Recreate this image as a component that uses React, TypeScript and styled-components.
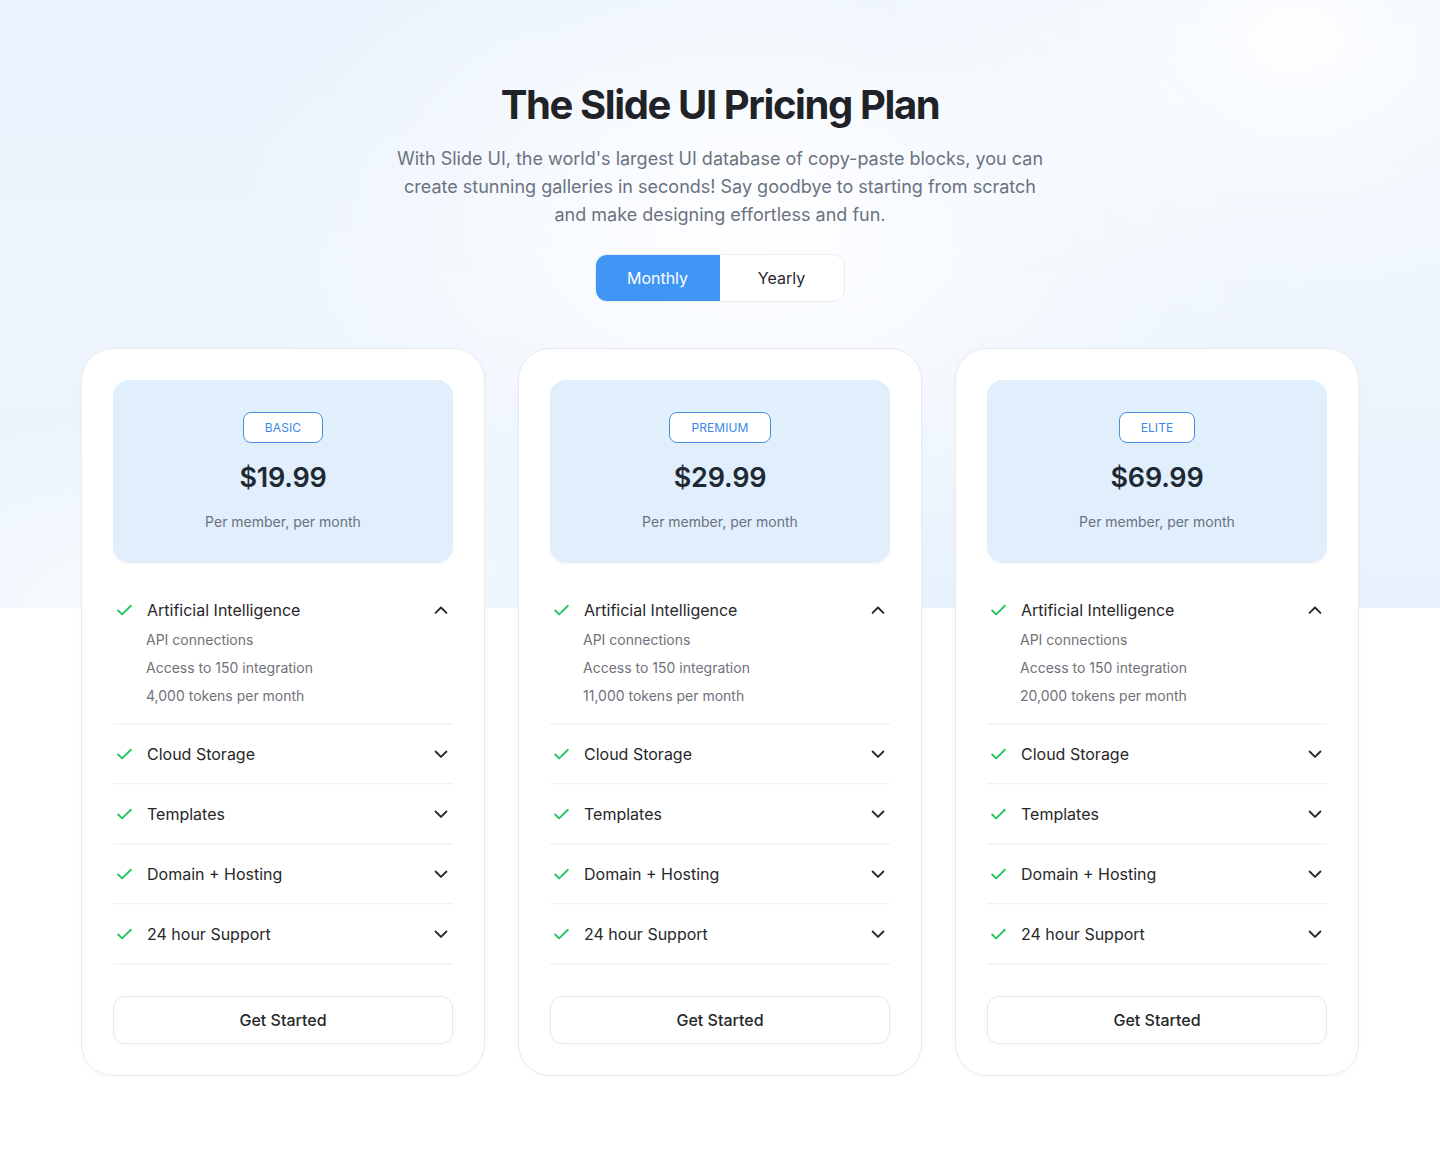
import React, { useState } from 'react';
import styled, { createGlobalStyle } from 'styled-components';

interface Plan {
  tier: string;
  price: string;
  tokens: string;
}

const plans: Plan[] = [
  { tier: 'BASIC', price: '$19.99', tokens: '4,000 tokens per month' },
  { tier: 'PREMIUM', price: '$29.99', tokens: '11,000 tokens per month' },
  { tier: 'ELITE', price: '$69.99', tokens: '20,000 tokens per month' },
];

const otherFeatures = ['Cloud Storage', 'Templates', 'Domain + Hosting', '24 hour Support'];

const GlobalStyle = createGlobalStyle`
  * { box-sizing: border-box; }
  body {
    margin: 0;
    background: #ffffff;
    font-family: Inter, 'Noto Sans', 'Liberation Sans', sans-serif;
    -webkit-font-smoothing: antialiased;
  }
`;

const Page = styled.div`
  position: relative;
  min-height: 1156px;
  background: #ffffff;
`;

const Backdrop = styled.div`
  position: absolute;
  top: 0;
  left: 0;
  right: 0;
  height: 608px;
  background:
    radial-gradient(ellipse 520px 360px at 52% 36%, rgba(255, 255, 255, 0.95) 0%, rgba(255, 255, 255, 0) 100%),
    radial-gradient(ellipse 420px 300px at 90% 6%, rgba(255, 255, 255, 0.9) 0%, rgba(255, 255, 255, 0) 100%),
    radial-gradient(ellipse 500px 200px at 14% 100%, rgba(255, 255, 255, 0.8) 0%, rgba(255, 255, 255, 0) 100%),
    linear-gradient(180deg, #e9f2fd 0%, #eef5fe 50%, #e8f2fd 100%);
  z-index: 0;
`;

const Content = styled.main`
  position: relative;
  z-index: 1;
  display: flex;
  flex-direction: column;
  align-items: center;
  padding-top: 81px;
  padding-bottom: 80px;
`;

const Title = styled.h1`
  margin: 0;
  font-size: 40px;
  line-height: 48px;
  font-weight: 700;
  letter-spacing: -1.4px;
  color: #1f2328;
`;

const Subtitle = styled.p`
  margin: 16px 0 0;
  max-width: 660px;
  text-align: center;
  font-size: 18px;
  line-height: 28px;
  color: #6b7280;
`;

const Toggle = styled.div`
  margin-top: 25px;
  display: flex;
  width: 250px;
  height: 48px;
  border-radius: 12px;
  background: #ffffff;
  border: 1px solid #e9ebee;
  overflow: hidden;
`;

const ToggleButton = styled.button<{ $active: boolean }>`
  flex: 1;
  border: none;
  margin: -1px 0 -1px -1px;
  background: ${p => (p.$active ? '#4096f5' : 'transparent')};
  color: ${p => (p.$active ? '#ffffff' : '#27272a')};
  font-family: inherit;
  font-size: 16px;
  font-weight: 400;
  cursor: pointer;
  border-radius: ${p => (p.$active ? '12px 0 0 12px' : '0')};
`;

const Cards = styled.div`
  margin-top: 46px;
  display: grid;
  grid-template-columns: repeat(3, 404px);
  gap: 33px;
`;

const Card = styled.section`
  background: #ffffff;
  border: 1px solid #e8eaed;
  border-radius: 32px;
  padding: 31px;
  display: flex;
  flex-direction: column;
  box-shadow: 0 2px 6px rgba(15, 23, 42, 0.02);
`;

const PricePanel = styled.div`
  background: #e1effd;
  border-radius: 16px;
  padding: 32px 0 31px;
  display: flex;
  flex-direction: column;
  align-items: center;
  box-shadow: 0 1px 3px rgba(15, 23, 42, 0.03);
`;

const Badge = styled.span`
  display: inline-flex;
  align-items: center;
  justify-content: center;
  height: 31px;
  padding: 0 21px;
  border: 1px solid #4a90e2;
  border-radius: 8px;
  background: #ffffff;
  color: #3b86e8;
  font-size: 12px;
  line-height: 1;
  letter-spacing: 0.1px;
`;

const Price = styled.div`
  margin-top: 17px;
  font-size: 27px;
  line-height: 36px;
  font-weight: 600;
  letter-spacing: -0.2px;
  color: #1f2933;
`;

const PriceNote = styled.div`
  margin-top: 16px;
  font-size: 14px;
  line-height: 20px;
  color: #6b7280;
`;

const FeatureList = styled.ul`
  list-style: none;
  margin: 17px 0 0;
  padding: 0;
`;

const FeatureItem = styled.li`
  padding: 18px 0 17px;
  border-bottom: 1px solid #eef0f2;
  box-shadow: 0 1px 1px rgba(15, 23, 42, 0.02);
`;

const FeatureHead = styled.div`
  display: flex;
  align-items: center;
  height: 24px;
  padding: 0 2px 0 2px;
`;

const FeatureName = styled.span`
  flex: 1;
  margin-left: 13px;
  font-size: 16px;
  line-height: 24px;
  color: #27272a;
`;

const SubList = styled.ul`
  list-style: none;
  margin: 4px 0 -4px;
  padding: 0 0 0 33px;
`;

const SubItem = styled.li`
  font-size: 14px;
  line-height: 28px;
  color: #71717a;
`;

const StartButton = styled.button`
  margin-top: 32px;
  height: 48px;
  width: 100%;
  border: 1px solid #e8eaed;
  border-radius: 12px;
  background: #ffffff;
  box-shadow: 0 1px 3px rgba(15, 23, 42, 0.04);
  font-family: inherit;
  font-size: 16px;
  font-weight: 500;
  color: #27272a;
  cursor: pointer;
`;

const CheckIcon = () => (
  <svg width="19" height="19" viewBox="0 0 24 24" fill="none" stroke="#22c55e" strokeWidth="2.3" strokeLinecap="round" strokeLinejoin="round">
    <path d="M20 6 9 17l-5-5" />
  </svg>
);

const Chevron = ({ up }: { up?: boolean }) => (
  <svg width="20" height="20" viewBox="0 0 24 24" fill="none" stroke="#27272a" strokeWidth="2.2" strokeLinecap="round" strokeLinejoin="round">
    <path d={up ? 'M5.5 15.5 12 9l6.5 6.5' : 'M5.5 9 12 15.5 18.5 9'} />
  </svg>
);

const PlanCard: React.FC<{ plan: Plan }> = ({ plan }) => (
  <Card>
    <PricePanel>
      <Badge>{plan.tier}</Badge>
      <Price>{plan.price}</Price>
      <PriceNote>Per member, per month</PriceNote>
    </PricePanel>

    <FeatureList>
      <FeatureItem>
        <FeatureHead>
          <CheckIcon />
          <FeatureName>Artificial Intelligence</FeatureName>
          <Chevron up />
        </FeatureHead>
        <SubList>
          <SubItem>API connections</SubItem>
          <SubItem>Access to 150 integration</SubItem>
          <SubItem>{plan.tokens}</SubItem>
        </SubList>
      </FeatureItem>
      {otherFeatures.map(name => (
        <FeatureItem key={name}>
          <FeatureHead>
            <CheckIcon />
            <FeatureName>{name}</FeatureName>
            <Chevron />
          </FeatureHead>
        </FeatureItem>
      ))}
    </FeatureList>

    <StartButton>Get Started</StartButton>
  </Card>
);

const App: React.FC = () => {
  const [billing, setBilling] = useState<'monthly' | 'yearly'>('monthly');

  return (
    <Page>
      <GlobalStyle />
      <Backdrop />
      <Content>
        <Title>The Slide UI Pricing Plan</Title>
        <Subtitle>
          With Slide UI, the world's largest UI database of copy-paste blocks, you can create stunning
          galleries in seconds! Say goodbye to starting from scratch and make designing effortless and fun.
        </Subtitle>

        <Toggle>
          <ToggleButton $active={billing === 'monthly'} onClick={() => setBilling('monthly')}>
            Monthly
          </ToggleButton>
          <ToggleButton $active={billing === 'yearly'} onClick={() => setBilling('yearly')}>
            Yearly
          </ToggleButton>
        </Toggle>

        <Cards>
          {plans.map(plan => (
            <PlanCard key={plan.tier} plan={plan} />
          ))}
        </Cards>
      </Content>
    </Page>
  );
};

export default App;
